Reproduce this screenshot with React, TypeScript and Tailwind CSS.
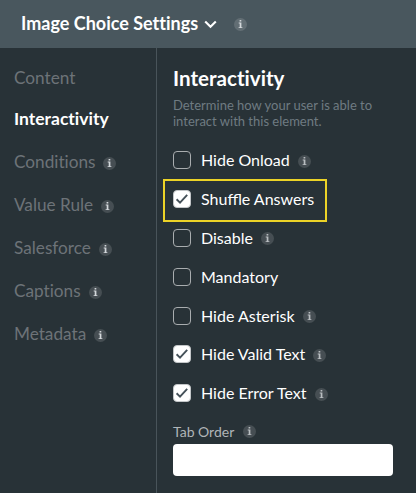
import React, { useState } from 'react';

const tabs = [
  { name: 'Content', info: false, height: 'h-[41px]' },
  { name: 'Interactivity', info: false, height: 'h-[42px]' },
  { name: 'Conditions', info: true, height: 'h-[43px]' },
  { name: 'Value Rule', info: true, height: 'h-[43px]' },
  { name: 'Salesforce', info: true, height: 'h-[43px]' },
  { name: 'Captions', info: true, height: 'h-[43px]' },
  { name: 'Metadata', info: true, height: 'h-[43px]' },
];

const options = [
  { name: 'Hide Onload', info: true },
  { name: 'Shuffle Answers', info: false },
  { name: 'Disable', info: true },
  { name: 'Mandatory', info: false },
  { name: 'Hide Asterisk', info: true },
  { name: 'Hide Valid Text', info: true },
  { name: 'Hide Error Text', info: true },
];

function InfoIcon({ className = '' }: { className?: string }) {
  return (
    <svg width="13" height="13" viewBox="0 0 13 13" className={`shrink-0 ${className}`}>
      <circle cx="6.5" cy="6.5" r="6.5" fill="#ffffff" fillOpacity="0.14" />
      <path d="M5.6 2h1.7v1.6H5.6zM4.7 4.6h2.7v4.6h1v0.9H4.6V9.2h1.1V5.5h-1z" fill="currentColor" />
    </svg>
  );
}

function Checkbox({ checked }: { checked: boolean }) {
  return (
    <span className={`flex h-[18px] w-[18px] shrink-0 items-center justify-center rounded-[4px] border ${checked ? 'border-[#c3c6c8] bg-white' : 'border-[#a9adaf]'}`}>
      {checked && (
        <svg width="14" height="12" viewBox="0 0 14 12" fill="none" className="shrink-0">
          <path d="M1.6 6.3L5 9.6L12.2 1.9" stroke="#455159" strokeWidth="1.9" />
        </svg>
      )}
    </span>
  );
}

function App() {
  const [selectedTab, setSelectedTab] = useState('Interactivity');
  const [checked, setChecked] = useState(['Shuffle Answers', 'Hide Valid Text', 'Hide Error Text']);

  const toggle = (name: string) => {
    setChecked(checked.includes(name) ? checked.filter((n) => n !== name) : [...checked, name]);
  };

  return (
    <div className="flex h-[493px] w-[416px] flex-col overflow-hidden bg-[#283237] font-['Lato',sans-serif] text-white">
      <header className="flex h-12 shrink-0 items-center bg-[#49575e] pl-[21px]">
        <h1 className="pb-[2px] text-[18px] leading-6 font-bold [font-variant-ligatures:none]">Image Choice Settings</h1>
        <svg width="13" height="9" viewBox="0 0 13 9" fill="none" className="ml-[6px]">
          <path d="M1.2 1.4L6.5 6.7L11.8 1.4" stroke="#ffffff" strokeWidth="2.1" />
        </svg>
        <InfoIcon className="ml-[17px] text-[#d3d8db]" />
      </header>

      <div className="flex flex-1">
        <nav className="w-[157px] shrink-0 border-r border-[#49545a] pt-[9px] pl-[14px] [font-variant-ligatures:none]">
          {tabs.map((tab) => (
            <button
              key={tab.name}
              onClick={() => setSelectedTab(tab.name)}
              className={`flex w-full items-center ${tab.height} ${selectedTab === tab.name ? 'text-[17.5px] font-bold text-white' : 'text-[17.2px] text-[#6d7378]'}`}
            >
              <span>{tab.name}</span>
              {tab.info && <InfoIcon className="mt-[3px] ml-2 text-[#d3d8db]" />}
            </button>
          ))}
        </nav>

        <main className="flex-1 pt-[17px] pl-4">
          <h2 className="text-[20.6px] leading-[26px] font-bold [font-variant-ligatures:none]">Interactivity</h2>
          <p className="mt-[6px] w-[220px] text-[13px] leading-4 text-[#6f7b82]">Determine how your user is able to interact with this element.</p>

          <div className="mt-3">
            {options.map((option) => (
              <div key={option.name} className="relative flex h-[38.8px] items-center">
                {option.name === 'Shuffle Answers' && (
                  <div className="pointer-events-none absolute -top-[1px] -left-[10px] h-[43px] w-[164px] border-2 border-[#ecd327]" />
                )}
                <button onClick={() => toggle(option.name)} className="flex items-center text-[16px]">
                  <Checkbox checked={checked.includes(option.name)} />
                  <span className="ml-[10px]">{option.name}</span>
                </button>
                {option.info && <InfoIcon className="mt-[2px] ml-2 text-[#b9bec1]" />}
              </div>
            ))}
          </div>

          <label htmlFor="tab-order" className="mt-[9px] flex h-5 items-center text-[14px] text-[#b0b5b8]">
            Tab Order
            <InfoIcon className="ml-[9px] text-[#b9bec1]" />
          </label>
          <input id="tab-order" type="text" className="mt-[2px] block h-8 w-[220px] rounded-[4px] bg-white px-2 text-black focus:outline-none" />
        </main>
      </div>
    </div>
  );
}

export default App;
